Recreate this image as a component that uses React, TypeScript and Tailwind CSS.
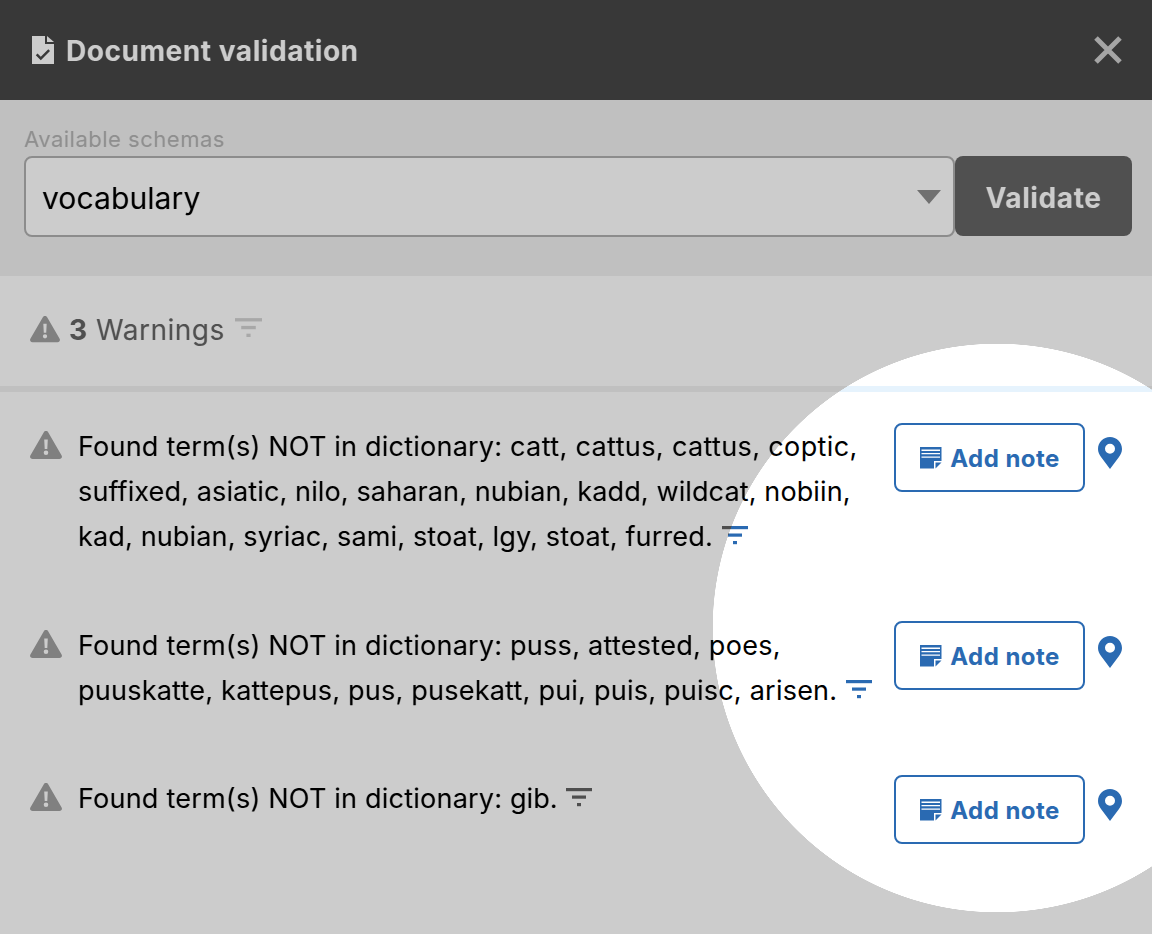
import React from "react";

const Warn = ({ className }: { className: string }) => (
  <svg viewBox="0 0 32 28" className={className} fill="#a0a0a0">
    <path fillRule="evenodd" d="M16 0c1 0 1.800.5 2.300 1.400l13.300 23.100c.9 1.700-.2 3.500-2.200 3.500H2.600c-2 0-3.100-1.800-2.200-3.500L13.700 1.400C14.200.5 15 0 16 0zM14.200 8.500l.5 9.500h2.600l.5-9.500h-3.600zM16 19.500a2.300 2.300 0 1 0 0 4.600 2.300 2.300 0 0 0 0-4.600z" />
  </svg>
);

const Filter = ({ className, color }: { className: string; color: string }) => (
  <svg viewBox="0 0 26 20" className={className} fill={color}>
    <rect x="0" y="0" width="26" height="3.200" />
    <rect x="6" y="7.500" width="14" height="3.200" />
    <rect x="11" y="15" width="4" height="3.200" />
  </svg>
);

const Note = () => (
  <svg viewBox="0 0 22 22" className="w-[22px] h-[22px] shrink-0" fill="#2a6ab2">
    <path fillRule="evenodd" d="M0 0h21.500v14h-7.500v7.500H0V0zM1.500 2.600v1.300h18.500V2.600H1.500zm0 3.400v1.300h18.500V6H1.500zm0 3.400v1.300h18.500V9.400H1.500z" />
    <path d="M15.500 15.500h6L15.500 21.500v-6z" />
  </svg>
);

const Pin = () => (
  <svg viewBox="0 0 24 32" className="w-6 h-8 shrink-0" fill="#2a6ab2">
    <path fillRule="evenodd" d="M12 0C5.400 0 0 5.300 0 11.900c0 3.200 1.300 5.700 3.200 8.300L12 32l8.800-11.800c1.900-2.600 3.200-5.100 3.200-8.300C24 5.300 18.600 0 12 0zm0 6.800a5 5 0 1 1 0 10 5 5 0 0 1 0-10z" />
  </svg>
);

const NoteButton = () => (
  <button className="w-[191px] h-[69px] shrink-0 flex items-center justify-center gap-[8px] pl-[1px] rounded-[8px] border-2 border-[#2a6ab2] bg-white text-[#2a6ab2] text-[24px] font-bold tracking-[0.45px]">
    <Note />
    <span className="mt-[2px]">Add note</span>
  </button>
);

const PREFIX = "Found term(s) NOT in dictionary:";

const Row = ({ children, className, buttonClass, pinClass }: { children: React.ReactNode; className: string; buttonClass: string; pinClass: string }) => (
  <div className={`flex items-start ${className}`}>
    <Warn className="w-8 h-7 mt-[7px] ml-[30px] shrink-0" />
    <div className="ml-4 w-[816px] shrink-0 text-[27px] leading-[45px] text-black">{children}</div>
    <div className={`flex items-start ${buttonClass}`}>
      <NoteButton />
      <div className={`ml-[13px] ${pinClass}`}><Pin /></div>
    </div>
  </div>
);

const Line = ({ children }: { children: React.ReactNode }) => (
  <div className="flex items-center whitespace-pre">{children}</div>
);

const Prefix = () => <span className="tracking-[0.22px]">{PREFIX} </span>;
const LineFilter = () => <Filter className="w-[26px] h-[20px] ml-[9px] -mt-[2px]" color="#2a6ab2" />;

export default function App() {
  return (
    <div className="relative w-[1152px] h-[934px] overflow-hidden bg-white font-['Inter','Liberation_Sans',sans-serif]">
      <header className="h-[100px] bg-[#464646] flex items-center justify-between pl-[32px] pr-[30px]">
        <div className="flex items-center gap-[12px]">
          <svg viewBox="0 0 22 28" className="w-[22px] h-[28px] -mt-[1px]" fill="#ffffff">
            <path fillRule="evenodd" d="M0 0h13v8h9v20H0V0zm5.500 17.500L3.800 19.200l5 5L18 15l-1.700-1.700-7.500 7.500-3.300-3.300z" />
            <path d="M15 0l7 6h-7V0z" />
          </svg>
          <span className="mt-[2px] text-[28px] font-bold tracking-[0.55px] text-white">Document validation</span>
        </div>
        <svg viewBox="0 0 28 28" className="w-7 h-7" stroke="#cfcfcf" strokeWidth="5" fill="none">
          <path d="M2 2l24 24M26 2L2 26" />
        </svg>
      </header>

      <section className="h-[176px] bg-[#f0f0f0] px-6 pt-[26px]">
        <div className="text-[22px] leading-[26px] tracking-[0.5px] text-[#b3b3b3] mb-[4px]">Available schemas</div>
        <div className="flex items-start">
          <div className="w-[931px] h-[81px] shrink-0 rounded-[8px] border-2 border-[#b0b0b0] bg-white flex items-center justify-between pl-4 pr-[12px]">
            <span className="mt-1 text-[30px] tracking-[0.1px] text-black">vocabulary</span>
            <svg viewBox="0 0 24 14" className="w-6 h-[14px] mt-[1px]" fill="#8c8c8c"><path d="M0 0h24L12 14z" /></svg>
          </div>
          <button className="w-[177px] h-[80px] shrink-0 pt-[3px] rounded-[8px] bg-[#646464] text-white text-[28px] font-bold tracking-[0.6px]">Validate</button>
        </div>
      </section>

      <section className="h-[110px] bg-white flex items-center pl-[30px] pb-[1px] text-[28px] text-[#646464]">
        <Warn className="w-[30px] h-7 -mt-[4px]" />
        <span className="ml-[9px] font-bold -mt-[2px]">3</span>
        <span className="ml-[9px] tracking-[0.5px] -mt-[2px]">Warnings</span>
        <Filter className="w-[27px] h-[21px] ml-[10px] -mt-[4px]" color="#d2d2d2" />
      </section>
      <div className="h-[6px] bg-[#e6f3fd]" />

      <Row className="h-[199px] pt-[32px]" buttonClass="-mt-[1px]" pinClass="mt-[14px]">
        <Line><Prefix /><span className="tracking-[0.37px]">catt, cattus, cattus, coptic,</span></Line>
        <Line><span className="tracking-[0.125px]">suffixed, asiatic, nilo, saharan, nubian, kadd, wildcat, nobiin,</span></Line>
        <Line><span className="tracking-[0.15px]">kad, nubian, syriac, sami, stoat, lgy, stoat, furred.</span><LineFilter /></Line>
      </Row>
      <Row className="h-[154px] pt-[32px]" buttonClass="-mt-[2px]" pinClass="mt-[15px]">
        <Line><Prefix /><span className="tracking-[0.27px]">puss, attested, poes,</span></Line>
        <Line><span className="tracking-[0.23px]">puuskatte, kattepus, pus, pusekatt, pui, puis, puisc, arisen.</span><LineFilter /></Line>
      </Row>
      <Row className="pt-[31px]" buttonClass="-mt-[1px]" pinClass="mt-[14px]">
        <Line><Prefix /><span>gib.</span><LineFilter /></Line>
      </Row>

      <div className="absolute inset-0 bg-black/20 backdrop-grayscale pointer-events-none [mask-image:radial-gradient(circle_at_997px_628px,transparent_284px,black_284.5px)]" />
    </div>
  );
}
